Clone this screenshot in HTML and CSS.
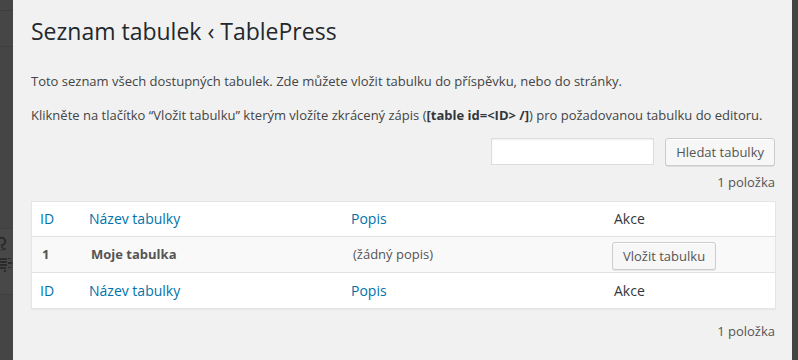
FILE: index.html
```html
<!DOCTYPE html>
<html lang="cs">

<head>
  <meta charset="UTF-8">
  <meta name="viewport" content="width=device-width, initial-scale=1.0">
  <title>Seznam tabulek</title>
  <link rel="stylesheet" href="styles.css">
</head>

<body>
  <div class="screen">
    <!-- kousek editoru pod prekryvem -->
    <div class="backdrop-left">
      <div class="bd-band bd-top"></div>
      <div class="bd-band bd-menu"></div>
      <div class="bd-band bd-gap"></div>
      <div class="bd-band bd-tools">
        <svg width="13" height="67" viewBox="0 0 13 67">
          <path d="M-2 10 Q3 7 5 11 Q6 15 1 17" fill="none" stroke="#2b2b2b" stroke-width="2" />
          <path d="M1 18 l4 2 M1 21 l5 -1" stroke="#2b2b2b" stroke-width="1.2" />
          <rect x="0" y="29" width="7" height="2" fill="#2b2b2b" />
          <rect x="0" y="32" width="7" height="2" fill="#2b2b2b" />
          <rect x="0" y="35" width="7" height="2" fill="#2b2b2b" />
          <rect x="0" y="38" width="6" height="2" fill="#2b2b2b" />
          <rect x="4" y="41" width="2" height="2" fill="#2b2b2b" />
          <rect x="8" y="29" width="3" height="1" fill="#2b2b2b" />
          <path d="M8 33 h3 l2 1 l-2 1 h-3 z" fill="#2b2b2b" />
          <rect x="8" y="38" width="3" height="1" fill="#2b2b2b" />
        </svg>
      </div>
      <div class="bd-band bd-rest"></div>
    </div>

    <div class="modal">
      <h2 class="modal-title">Seznam tabulek ‹ TablePress</h2>
      <p class="intro">Toto seznam všech dostupných tabulek. Zde můžete vložit tabulku do příspěvku, nebo do stránky.</p>
      <p class="intro intro-second">Klikněte na tlačítko “Vložit tabulku” kterým vložíte zkrácený zápis (<strong>[table id=&lt;ID&gt; /]</strong>) pro požadovanou tabulku do editoru.</p>

      <div class="search-box">
        <input type="search" class="search-input">
        <button class="button">Hledat tabulky</button>
      </div>

      <div class="tablenav">1 položka</div>

      <table class="list-table">
        <thead>
          <tr>
            <th class="col-id"><a href="#">ID</a></th>
            <th class="col-name"><a href="#">Název tabulky</a></th>
            <th class="col-desc"><a href="#">Popis</a></th>
            <th class="col-action">Akce</th>
          </tr>
        </thead>
        <tbody>
          <tr class="row-alt">
            <td class="cell-strong">1</td>
            <td class="cell-strong">Moje tabulka</td>
            <td>(žádný popis)</td>
            <td class="cell-action"><button class="button">Vložit tabulku</button></td>
          </tr>
        </tbody>
        <tfoot>
          <tr>
            <th><a href="#">ID</a></th>
            <th><a href="#">Název tabulky</a></th>
            <th><a href="#">Popis</a></th>
            <th>Akce</th>
          </tr>
        </tfoot>
      </table>

      <div class="tablenav tablenav-bottom">1 položka</div>
    </div>

    <div class="backdrop-right"></div>
  </div>
</body>

</html>
```

FILE: styles.css
```css
* {
  margin: 0;
  padding: 0;
  box-sizing: border-box;
}

body {
  background-color: #444;
  font-family: "Open Sans", "Noto Sans", sans-serif;
  font-size: 13px;
  color: #444;
  overflow: hidden;
}

.screen {
  display: flex;
  width: 798px;
  height: 360px;
}

/* zatemneny editor vlevo */
.backdrop-left {
  display: flex;
  flex-direction: column;
  width: 13px;
  flex-shrink: 0;
  background-color: #464646;
}

.bd-top {
  height: 11px;
  border-bottom: 1px solid #3e3e3e;
}

.bd-menu {
  height: 36px;
  border-bottom: 1px solid #3e3e3e;
}

.bd-gap {
  height: 181px;
  background-color: #454545;
}

.bd-tools {
  height: 67px;
  background-color: #484848;
  border-top: 1px solid #404040;
  border-bottom: 1px solid #404040;
}

.bd-tools svg {
  display: block;
}

.bd-rest {
  flex: 1;
  background-color: #454545;
}

.backdrop-right {
  width: 6px;
  flex-shrink: 0;
  background-color: #444;
}

/* okno */
.modal {
  flex: 1;
  background-color: #f1f1f1;
  padding: 0 16px 0 18px;
}

.modal-title {
  margin-top: 17px;
  font-size: 23px;
  font-weight: 400;
  line-height: 29px;
  color: #23282d;
}

.intro {
  margin-top: 26px;
  line-height: 19.5px;
}

.intro-second {
  margin-top: 14.5px;
}

.intro strong {
  font-weight: 700;
  color: #32373c;
}

.search-box {
  display: flex;
  justify-content: flex-end;
  gap: 11px;
  margin-top: 12.5px;
  margin-right: 1px;
}

.search-input {
  width: 163px;
  height: 27px;
  border: 1px solid #ddd;
  background-color: #fff;
  box-shadow: inset 0 1px 2px rgba(0, 0, 0, 0.07);
  outline: none;
}

.button {
  height: 28px;
  padding: 0 10px 1px;
  font-family: inherit;
  font-size: 13px;
  line-height: 26px;
  color: #555;
  background-color: #f7f7f7;
  border: 1px solid #ccc;
  border-radius: 3px;
  box-shadow: inset 0 1px 0 #fff, 0 1px 0 rgba(0, 0, 0, 0.08);
  cursor: pointer;
}

.tablenav {
  margin-top: 7px;
  margin-right: 1px;
  text-align: right;
  line-height: 19.5px;
  color: #555;
}

.tablenav-bottom {
  margin-top: 13px;
}

/* seznam tabulek */
.list-table {
  width: 100%;
  margin-top: 8px;
  border: 1px solid #e5e5e5;
  border-spacing: 0;
  background-color: #fff;
  box-shadow: 0 1px 1px rgba(0, 0, 0, 0.04);
  table-layout: fixed;
}

.list-table th {
  height: 35px;
  padding: 0 8px;
  font-size: 14px;
  font-weight: 400;
  text-align: left;
  color: #32373c;
}

.list-table thead th {
  border-bottom: 1px solid #e1e1e1;
}

.list-table tfoot th {
  height: 36px;
  border-top: 1px solid #e1e1e1;
}

.list-table th a {
  color: #0073aa;
  text-decoration: none;
}

.col-id {
  width: 49px;
}

.col-name {
  width: 262px;
}

.col-desc {
  width: 263px;
}

.list-table td {
  height: 35px;
  padding: 0 10px;
  color: #555;
  vertical-align: middle;
}

.row-alt td {
  background-color: #f9f9f9;
}

.cell-strong {
  font-weight: 700;
}

.list-table td.cell-action {
  padding: 3px 6px 0;
}
```
